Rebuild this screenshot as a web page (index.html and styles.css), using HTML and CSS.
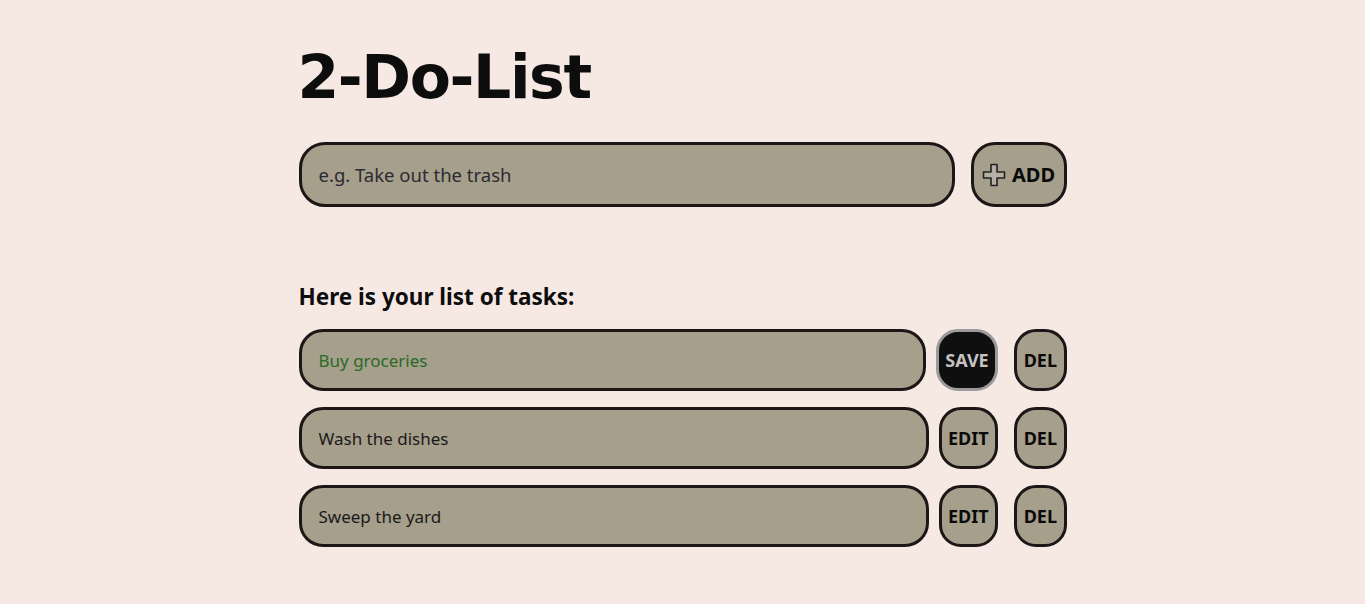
FILE: index.html
```html
<!DOCTYPE html>
<html lang="en">
<head>
<meta charset="utf-8">
<title>2-Do-List</title>
<link rel="stylesheet" href="styles.css">
</head>
<body>
<main class="app">
  <h1 class="title">2-Do-List</h1>
  <form class="new-task">
    <input class="field new-field" type="text" placeholder="e.g. Take out the trash">
    <button class="btn add-btn" type="button">
      <svg class="plus" width="24" height="24" viewBox="0 0 24 24"><path d="M9 1.5h6v7.5h7.5v6H15v7.5H9V15H1.5V9H9z" fill="#b5b1a4" stroke="#222" stroke-width="1.6" stroke-linejoin="round"/></svg>
      <span>ADD</span>
    </button>
  </form>
  <h2 class="list-title">Here is your list of tasks:</h2>
  <ul class="tasks">
    <li class="task">
      <input class="field task-field editing" type="text" value="Buy groceries">
      <button class="btn small save" type="button">SAVE</button>
      <button class="btn small" type="button">DEL</button>
    </li>
    <li class="task">
      <input class="field task-field" type="text" value="Wash the dishes" readonly>
      <button class="btn small" type="button">EDIT</button>
      <button class="btn small" type="button">DEL</button>
    </li>
    <li class="task">
      <input class="field task-field" type="text" value="Sweep the yard" readonly>
      <button class="btn small" type="button">EDIT</button>
      <button class="btn small" type="button">DEL</button>
    </li>
  </ul>
</main>
</body>
</html>
```
FILE: styles.css
```css
* { box-sizing: border-box; }
body {
  margin: 0;
  background: #f6e9e4;
  font-family: "Noto Sans", "Open Sans", sans-serif;
  color: #0d0d0d;
}
.app {
  width: 768px;
  margin: 0 auto;
  padding-top: 44px;
}
.title {
  margin: 0 0 32px -1px;
  font-family: "DejaVu Sans", sans-serif;
  font-size: 60px;
  line-height: 1.1;
  font-weight: 700;
  letter-spacing: -1.4px;
}
.new-task {
  display: flex;
  gap: 16px;
  margin: 0;
}
.field {
  background: #a59f8c;
  border: 3px solid #1c1716;
  border-radius: 26px;
  font-family: inherit;
  outline: none;
  padding: 0 17px;
  color: #1a1a1a;
  min-width: 0;
}
.new-field {
  flex: 1;
  height: 65px;
  font-size: 18.5px;
}
.new-field::placeholder { color: #2c2a33; opacity: 1; }
.btn {
  background: #a59f8c;
  border: 3px solid #1c1716;
  border-radius: 24px;
  font-family: inherit;
  font-weight: 700;
  color: #0a0a0a;
  cursor: pointer;
}
.add-btn {
  width: 96px;
  height: 65px;
  display: flex;
  align-items: center;
  justify-content: center;
  gap: 6px;
  padding: 0 6px;
  font-size: 20px;
}
.plus { flex: none; }
.list-title {
  margin: 76px 0 19px 0;
  font-size: 22.5px;
  font-weight: 700;
  line-height: 1.2;
}
.tasks {
  list-style: none;
  margin: 0;
  padding: 0;
  display: flex;
  flex-direction: column;
  gap: 16px;
}
.task {
  display: flex;
  align-items: center;
}
.task-field {
  flex: 1;
  height: 62px;
  font-size: 17px;
  border-radius: 24px;
  margin-right: 10px;
}
.task-field.editing { color: #2a6a26; }
.small {
  height: 62px;
  padding: 0 6.5px;
  font-size: 18px;
  border-radius: 22px;
}
.small + .small { margin-left: 16px; }
.save {
  background: #0f0f0f;
  border-color: #9a9a9a;
  color: #c6c2c2;
}
```
